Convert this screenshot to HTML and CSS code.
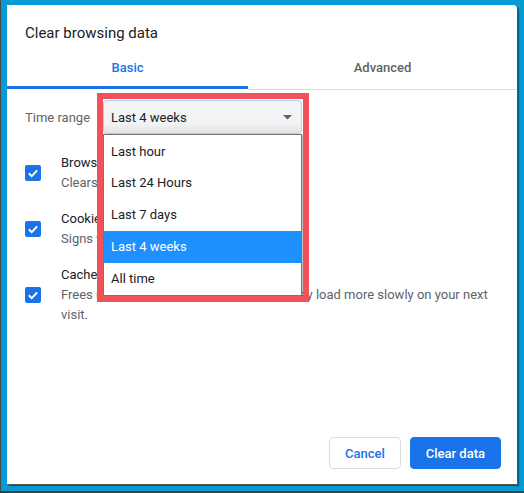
FILE: index.html
```html
<!DOCTYPE html>
<html>
<head>
<meta charset="utf-8">
<link rel="stylesheet" href="styles.css">
</head>
<body>
<div class="dialog">
  <h1 class="title">Clear browsing data</h1>
  <div class="tabs">
    <div class="tab active">Basic</div>
    <div class="tab">Advanced</div>
  </div>
  <div class="content">
    <div class="range-row">
      <span class="range-label">Time range</span>
      <div class="select-wrap">
        <div class="select">
          <span>Last 4 weeks</span>
          <svg class="arrow" width="9" height="5" viewBox="0 0 9 5"><polygon points="0,0 9,0 4.5,4.5" fill="#5f6368"/></svg>
        </div>
        <ul class="options">
          <li>Last hour</li>
          <li>Last 24 Hours</li>
          <li>Last 7 days</li>
          <li class="selected">Last 4 weeks</li>
          <li>All time</li>
        </ul>
        <div class="frame"></div>
      </div>
    </div>
    <div class="item">
      <svg class="check" width="16" height="16" viewBox="0 0 16 16"><rect width="16" height="16" rx="2" fill="#1a73e8"/><path d="M3.8 8.3 L6.7 11.1 L12.2 5.4" fill="none" stroke="#fff" stroke-width="2"/></svg>
      <div class="item-text">
        <div class="item-title">Browsing history</div>
        <div class="item-desc">Clears history from all synced devices</div>
      </div>
    </div>
    <div class="item">
      <svg class="check" width="16" height="16" viewBox="0 0 16 16"><rect width="16" height="16" rx="2" fill="#1a73e8"/><path d="M3.8 8.3 L6.7 11.1 L12.2 5.4" fill="none" stroke="#fff" stroke-width="2"/></svg>
      <div class="item-text">
        <div class="item-title">Cookies and other site data</div>
        <div class="item-desc">Signs you out of most sites.</div>
      </div>
    </div>
    <div class="item">
      <svg class="check" width="16" height="16" viewBox="0 0 16 16"><rect width="16" height="16" rx="2" fill="#1a73e8"/><path d="M3.8 8.3 L6.7 11.1 L12.2 5.4" fill="none" stroke="#fff" stroke-width="2"/></svg>
      <div class="item-text">
        <div class="item-title">Cached images and files</div>
        <div class="item-desc">Frees up less than 320 MB. Some sites may load more slowly on your next visit.</div>
      </div>
    </div>
  </div>
  <div class="footer">
    <button class="btn cancel">Cancel</button>
    <button class="btn primary">Clear data</button>
  </div>
</div>
</body>
</html>
```

FILE: styles.css
```css
html, body {
  margin: 0;
  padding: 0;
}
body {
  width: 524px;
  height: 493px;
  box-sizing: border-box;
  background: #059bd5;
  border-left: 1px solid #4a4a4a;
  border-bottom: 2px solid #3c3c3c;
  padding: 5px 0 0 6px;
  font-family: Roboto, "Noto Sans", "Liberation Sans", sans-serif;
  overflow: hidden;
}
.dialog {
  width: 510px;
  height: 479px;
  background: #fff;
  display: flex;
  flex-direction: column;
  box-shadow: 1px 1px 0 #555, 2px 2px 1px rgba(0,0,0,0.45);
  border-top-right-radius: 4px;
}
.title {
  margin: 18px 0 0 18px;
  font-size: 15px;
  line-height: 20px;
  font-weight: 400;
  color: #202124;
}
.tabs {
  display: flex;
  align-items: flex-start;
  margin-top: 5px;
}
.tab {
  box-sizing: border-box;
  text-align: center;
  font-size: 13px;
  font-weight: 500;
  line-height: 20px;
  padding-top: 10px;
  height: 42px;
  color: #5f6368;
  flex: 1;
  border-bottom: 1px solid #dadce0;
}
.tab.active {
  flex: 0 0 241px;
  height: 41px;
  color: #1a73e8;
  border-bottom: 3px solid #1a73e8;
}
.content {
  padding: 10px 20px 0 18px;
}
.range-row {
  display: flex;
  align-items: center;
  height: 34px;
}
.range-label {
  width: 78px;
  font-size: 13px;
  color: #5f6368;
}
.select-wrap {
  position: relative;
  width: 199px;
  height: 34px;
}
.select {
  box-sizing: border-box;
  height: 34px;
  display: flex;
  align-items: center;
  justify-content: space-between;
  padding: 0 9px 0 7px;
  background: linear-gradient(#f1f3f4 0%, #f1f3f4 70%, #e2e3e5 100%);
  border: 1px solid #b5cdf7;
  border-bottom-color: #c9cbce;
  border-radius: 4px;
  font-size: 13px;
  color: #202124;
}
.arrow {
  display: block;
}
.options {
  position: absolute;
  left: 0;
  top: 34px;
  width: 199px;
  box-sizing: border-box;
  margin: 0;
  padding: 0;
  list-style: none;
  background: #fff;
  border: 1px solid #767676;
  box-shadow: 1px 1px 2px rgba(0,0,0,0.35);
  z-index: 2;
}
.options li {
  height: 32px;
  line-height: 32px;
  padding-left: 7px;
  font-size: 13px;
  color: #202124;
}
.options li:first-child {
  line-height: 34px;
}
.options li.selected {
  background: #1e90ff;
  color: #fff;
}
.frame {
  position: absolute;
  left: -6px;
  top: -7px;
  width: 212px;
  height: 209px;
  box-sizing: border-box;
  border: 6px solid #ef5258;
  z-index: 3;
  pointer-events: none;
}
.item {
  display: flex;
  align-items: center;
  gap: 20px;
  margin-top: 16px;
}
.range-row + .item {
  margin-top: 19px;
}
.check {
  flex: 0 0 16px;
  display: block;
}
.item-text {
  font-size: 13px;
  line-height: 20px;
}
.item-title {
  color: #202124;
}
.item-desc {
  color: #5f6368;
}
.footer {
  margin-top: auto;
  display: flex;
  justify-content: flex-end;
  gap: 9px;
  padding: 0 16px 15px 0;
}
.btn {
  height: 32px;
  padding: 0 15px;
  border-radius: 4px;
  border: 1px solid #dadce0;
  font-family: Roboto, "Noto Sans", sans-serif;
  font-size: 13px;
  font-weight: 500;
  background: #fff;
  color: #1a73e8;
}
.btn.primary {
  background: #1a73e8;
  border-color: #1a73e8;
  color: #fff;
}
```
